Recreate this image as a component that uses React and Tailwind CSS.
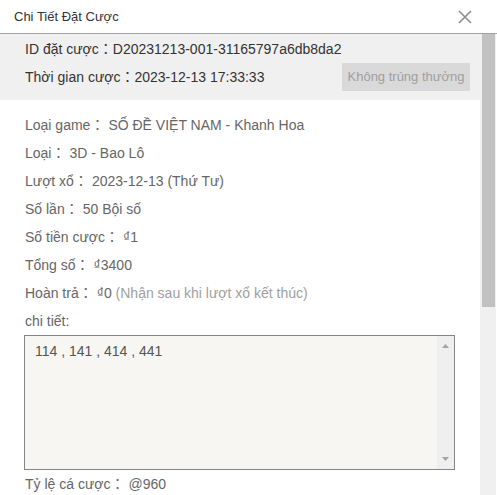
import React from 'react';

const rows = [
  { label: 'Loại game', value: 'SỐ ĐỀ VIỆT NAM - Khanh Hoa' },
  { label: 'Loại', value: '3D - Bao Lô' },
  { label: 'Lượt xổ', value: '2023-12-13 (Thứ Tư)' },
  { label: 'Số lần', value: '50 Bội số' },
  { label: 'Số tiền cược', value: '₫1' },
  { label: 'Tổng số', value: '₫3400' },
];

const Row = ({ label, children }) => (
  <div className="flex h-[28px] items-center text-[14px] text-[#666]">
    <span>{label}：</span>
    <span className="pl-[4px]">{children}</span>
  </div>
);

const App = () => {
  return (
    <div
      className="w-[497px] h-[495px] bg-white overflow-hidden flex flex-col"
      style={{ fontFamily: '"Liberation Sans", Arial, "Noto Sans CJK JP", sans-serif' }}
    >
      {/* header */}
      <div className="h-[34px] shrink-0 flex items-center justify-between border-b border-[#a3a3a3] pl-[14px] pr-[25px]">
        <span className="text-[13px] text-[#333]">Chi Tiết Đặt Cược</span>
        <svg width="14" height="14" viewBox="0 0 14 14" className="mt-[1px]">
          <path d="M1 1 L13 13 M13 1 L1 13" stroke="#8c8c8c" strokeWidth="1.6" fill="none" />
        </svg>
      </div>

      <div className="flex flex-1 min-h-0">
        {/* body */}
        <div className="w-[480px] shrink-0">
          <div className="bg-[#f0f0f0] h-[66px] pt-[1px] pl-[25px] pr-[10px] text-[14px] text-[#333]">
            <div className="h-[28px] flex items-center">ID đặt cược：D20231213-001-31165797a6db8da2</div>
            <div className="h-[28px] flex items-center justify-between">
              <span>Thời gian cược：2023-12-13 17:33:33</span>
              <span className="w-[128px] h-[28px] bg-[#d9d9d9] text-[#a0a0a0] text-[13px] flex items-center justify-center">
                Không trúng thưởng
              </span>
            </div>
          </div>

          <div className="pt-[11px] pl-[25px]">
            {rows.map((r) => (
              <Row key={r.label} label={r.label}>{r.value}</Row>
            ))}
            <Row label="Hoàn trả">
              ₫0 <span className="text-[#a0a0a0]">(Nhận sau khi lượt xổ kết thúc)</span>
            </Row>
            <div className="h-[28px] flex items-center text-[14px] text-[#666]">chi tiết:</div>

            <div className="w-[431px] h-[135px] -ml-[1px] border border-[#858585] bg-[#f7f6f2] flex">
              <div className="flex-1 pl-[10px] pt-[5px] text-[14px] text-[#555]">114 , 141 , 414 , 441</div>
              <div className="w-[17px] bg-[#efefef] flex flex-col items-center justify-between py-[8px]">
                <svg width="7" height="4" viewBox="0 0 7 4"><path d="M0 4 L3.5 0 L7 4 Z" fill="#a3a3a3" /></svg>
                <svg width="7" height="4" viewBox="0 0 7 4"><path d="M0 0 L3.5 4 L7 0 Z" fill="#a3a3a3" /></svg>
              </div>
            </div>

            <Row label="Tỷ lệ cá cược">@960</Row>
          </div>
        </div>

        {/* page scrollbar */}
        <div className="w-[16px] shrink-0 bg-[#f0f0f0] pl-[2px] pr-[1px]">
          <div className="h-[273px] bg-[#c1c1c1]" />
        </div>
      </div>
    </div>
  );
};

export default App;
